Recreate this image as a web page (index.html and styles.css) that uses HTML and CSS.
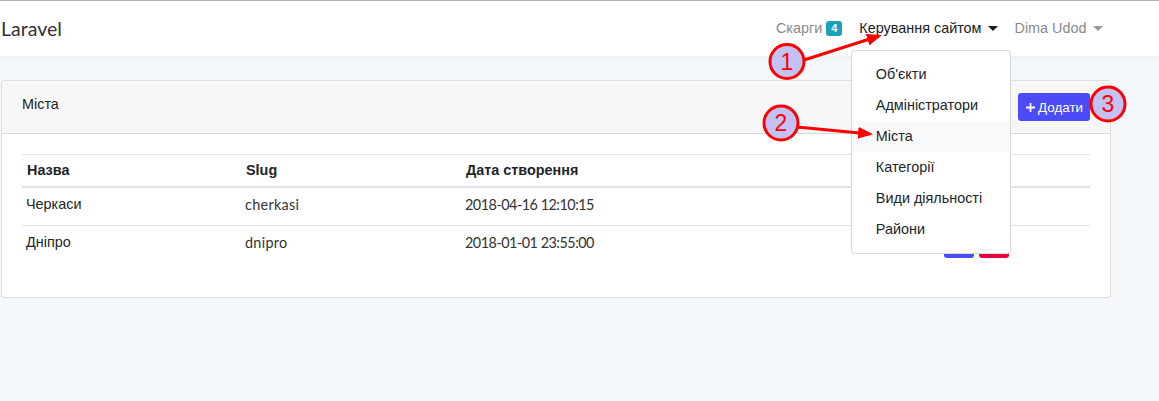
FILE: index.html
```html
<!DOCTYPE html>
<html lang="uk">
<head>
<meta charset="utf-8">
<title>Міста</title>
<link rel="stylesheet" href="styles.css">
</head>
<body>
<header class="navbar">
  <div class="container nav-inner">
    <a class="brand" href="#">Laravel</a>
    <ul class="nav">
      <li class="nav-item"><a class="nav-link muted" href="#">Скарги <span class="badge">4</span></a></li>
      <li class="nav-item dropdown">
        <a class="nav-link active caret" href="#">Керування сайтом</a>
        <ul class="dropdown-menu">
          <li><a class="dropdown-item" href="#">Об'єкти</a></li>
          <li><a class="dropdown-item" href="#">Адміністратори</a></li>
          <li><a class="dropdown-item hover" href="#">Міста</a></li>
          <li><a class="dropdown-item" href="#">Категорії</a></li>
          <li><a class="dropdown-item" href="#">Види діяльності</a></li>
          <li><a class="dropdown-item" href="#">Райони</a></li>
        </ul>
      </li>
      <li class="nav-item"><a class="nav-link muted caret" href="#">Dima Udod</a></li>
    </ul>
  </div>
</header>

<main class="container main">
  <section class="card">
    <div class="card-header">
      <span class="card-title">Міста</span>
      <a class="btn btn-add" href="#"><svg class="plus" viewBox="0 0 10 10" width="9" height="9"><path d="M4 0h2v4h4v2H6v4H4V6H0V4h4z" fill="#fff"/></svg>Додати</a>
    </div>
    <div class="card-body">
      <table class="table">
        <thead>
          <tr><th class="c1">Назва</th><th class="c2">Slug</th><th>Дата створення</th><th class="c5"></th></tr>
        </thead>
        <tbody>
          <tr><td>Черкаси</td><td class="raw slug">cherkasi</td><td class="raw date">2018-04-16 12:10:15</td><td class="actions"><span class="btn-sm edit"></span><span class="btn-sm del"></span></td></tr>
          <tr><td>Дніпро</td><td class="raw slug">dnipro</td><td class="raw date">2018-01-01 23:55:00</td><td class="actions"><span class="btn-sm edit"></span><span class="btn-sm del"></span></td></tr>
        </tbody>
      </table>
    </div>
  </section>
</main>

<svg class="annotations" width="1159" height="401" viewBox="0 0 1159 401">
  <defs>
    <marker id="head" markerWidth="5" markerHeight="4" refX="4" refY="2" orient="auto" markerUnits="strokeWidth">
      <path d="M0,0 L5,2 L0,4 z" fill="#ff0000"/>
    </marker>
  </defs>
  <line x1="804" y1="60" x2="879" y2="36" stroke="#ff0000" stroke-width="3" marker-end="url(#head)"/>
  <line x1="797" y1="127" x2="870" y2="134" stroke="#ff0000" stroke-width="3" marker-end="url(#head)"/>
  <circle cx="787" cy="61.5" r="17" fill="#c2c2f5" stroke="#ff0000" stroke-width="3"/>
  <circle cx="781" cy="123" r="17" fill="#c2c2f5" stroke="#ff0000" stroke-width="3"/>
  <circle cx="1108" cy="104" r="17" fill="#c2c2f5" stroke="#ff0000" stroke-width="3"/>
  <text x="787" y="70" class="num">1</text>
  <text x="781" y="131" class="num">2</text>
  <text x="1108" y="112" class="num">3</text>
</svg>
</body>
</html>
```

FILE: styles.css
```css
* { box-sizing: border-box; }
html, body { margin: 0; padding: 0; }
body {
  background: #f5f8fa;
  font-family: "Liberation Sans", Arial, sans-serif;
  font-size: 14.4px;
  line-height: 23px;
  color: #212529;
  position: relative;
  min-height: 401px;
}
a { text-decoration: none; color: inherit; }
ul { list-style: none; margin: 0; padding: 0; }

.container { width: 1110px; margin-left: 1px; }

.navbar {
  background: #fff;
  border-top: 1px solid #b4b4b4;
  height: 56px;
  box-shadow: 0 2px 4px rgba(0, 0, 0, 0.04);
}
.nav-inner {
  height: 55px;
  display: flex;
  align-items: center;
  justify-content: space-between;
}
.brand {
  font-family: Lato, "Liberation Sans", sans-serif;
  font-size: 19.5px;
  color: #333;
  margin-top: -1px;
}
.nav { display: flex; align-items: center; }
.nav-item { position: relative; }
.nav-link {
  display: flex;
  align-items: center;
  padding: 8px 8.5px;
  line-height: 23px;
}
.nav-link.muted { color: #8a8a8a; }
.nav-link.active { color: #1b1b1b; }
.caret::after {
  content: "";
  display: inline-block;
  margin-left: 6px;
  border-top: 5px solid currentColor;
  border-left: 5px solid transparent;
  border-right: 5px solid transparent;
}
.nav-link.muted.caret::after { border-top-color: #9a9a9a; }
.badge {
  display: inline-block;
  margin-left: 4px;
  background: #17a2b8;
  color: #fff;
  font-size: 11px;
  font-weight: bold;
  line-height: 11px;
  padding: 2px 5px;
  border-radius: 3px;
}

.dropdown-menu {
  position: absolute;
  left: 0;
  top: calc(100% + 2px);
  width: 160px;
  background: #fff;
  border: 1px solid rgba(0, 0, 0, 0.15);
  border-radius: 4px;
  padding: 8px 0;
  z-index: 10;
}
.dropdown-item {
  display: block;
  padding: 4px 24px;
  line-height: 23px;
  color: #212529;
  white-space: nowrap;
}
.dropdown-item.hover { background: #f8f9fa; }

.main { padding-top: 24px; }
.card {
  background: #fff;
  border: 1px solid rgba(0, 0, 0, 0.125);
  border-radius: 4px;
}
.card-header {
  background: #f7f7f7;
  border-bottom: 1px solid rgba(0, 0, 0, 0.125);
  padding: 12px 20px;
  display: flex;
  justify-content: space-between;
  align-items: flex-start;
  border-radius: 4px 4px 0 0;
}
.card-title { line-height: 22px; }
.btn-add {
  display: flex;
  align-items: center;
  gap: 3px;
  height: 28px;
  padding: 0 7px 0 8px;
  background: #4b4bf8;
  color: #fff;
  border-radius: 3px;
  font-size: 13.4px;
}
.plus { display: block; }
.card-body { padding: 20px; }

.table {
  width: 100%;
  border-collapse: collapse;
  margin-bottom: 14px;
}
.table th {
  text-align: left;
  font-weight: bold;
  padding: 4px 5px 4px;
  border-top: 1px solid #dee2e6;
  border-bottom: 2px solid #dee2e6;
  line-height: 23px;
}
.table td {
  padding: 5px 4px;
  vertical-align: top;
  line-height: 23px;
  border-top: 1px solid #dee2e6;
}
.table tbody tr:first-child td { border-top: none; }
.c1 { width: 219px; }
.c2 { width: 220px; }
.c5 { width: 150px; }
.raw { font-family: Lato, "Liberation Sans", sans-serif; color: #333; font-size: 14.4px; }
.slug { letter-spacing: 0.3px; }
.date { letter-spacing: -0.5px; }
.actions { display: flex; gap: 5px; }
.btn-sm {
  display: inline-block;
  width: 30px;
  height: 27px;
  border-radius: 3px;
}
.edit { background: #4b4bf8; }
.del { background: #e3073f; }

.annotations {
  position: absolute;
  left: 0;
  top: 0;
  pointer-events: none;
  z-index: 20;
}
.num {
  font-family: "Liberation Sans", Arial, sans-serif;
  font-size: 23px;
  fill: #ff0000;
  text-anchor: middle;
}
```
